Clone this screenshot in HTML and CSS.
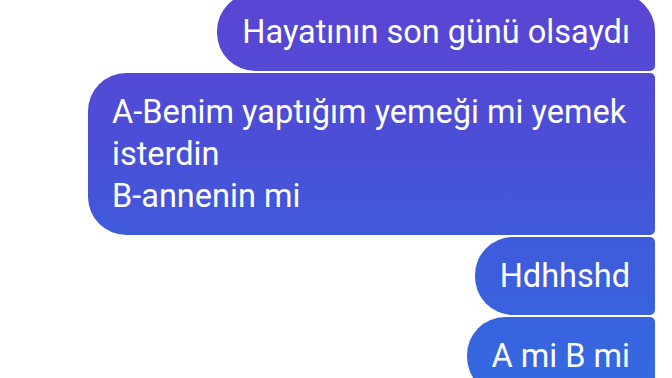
FILE: index.html
```html
<!DOCTYPE html>
<html lang="tr">
<head>
<meta charset="utf-8">
<title>Sohbet</title>
<link rel="stylesheet" href="styles.css">
</head>
<body>
<main class="chat">
  <div class="msg msg-first">Hayatının son günü olsaydı</div>
  <div class="msg msg-wide">A-Benim yaptığım yemeği mi yemek isterdin<br>B-annenin mi</div>
  <div class="msg">Hdhhshd</div>
  <div class="msg">A mi B mi</div>
</main>
</body>
</html>
```
FILE: styles.css
```css
html, body {
  margin: 0;
  padding: 0;
  background: #ffffff;
  overflow: hidden;
}
body {
  width: 672px;
  height: 378px;
  font-family: Roboto, "Noto Sans", "Liberation Sans", sans-serif;
}
.chat {
  display: flex;
  flex-direction: column;
  align-items: flex-end;
  gap: 2px;
  margin-top: -7px;
  padding-right: 17px;
}
.msg {
  box-sizing: border-box;
  max-width: 567px;
  padding: 18px 25px 18px 25px;
  font-size: 32.5px;
  line-height: 42px;
  color: #ffffff;
  border-radius: 38px 5px 5px 38px;
  background: linear-gradient(180deg, #5a45d3 0px, #4a4fd7 150px, #3f5bdb 240px, #3469e1 378px);
  background-attachment: fixed;
}
.msg-first {
  border-radius: 38px 38px 5px 38px;
}
.msg-wide {
  width: 567px;
  padding-left: 24px;
  padding-right: 21px;
}
```
